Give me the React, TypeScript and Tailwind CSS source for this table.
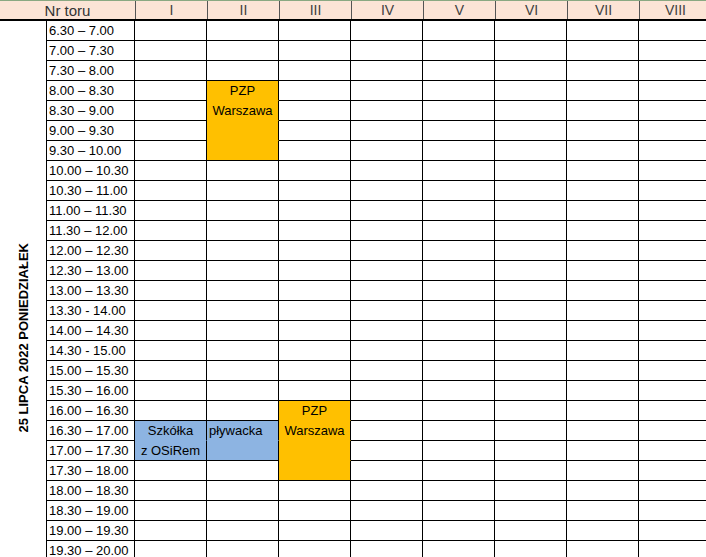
const times = [
  '6.30 – 7.00',
  '7.00 – 7.30',
  '7.30 – 8.00',
  '8.00 – 8.30',
  '8.30 – 9.00',
  '9.00 – 9.30',
  '9.30 – 10.00',
  '10.00 – 10.30',
  '10.30 – 11.00',
  '11.00 – 11.30',
  '11.30 – 12.00',
  '12.00 – 12.30',
  '12.30 – 13.00',
  '13.00 – 13.30',
  '13.30 - 14.00',
  '14.00 – 14.30',
  '14.30 - 15.00',
  '15.00 – 15.30',
  '15.30 – 16.00',
  '16.00 – 16.30',
  '16.30 – 17.00',
  '17.00 – 17.30',
  '17.30 – 18.00',
  '18.00 – 18.30',
  '18.30 – 19.00',
  '19.00 – 19.30',
  '19.30 – 20.00',
];

const lanes = ['I', 'II', 'III', 'IV', 'V', 'VI', 'VII', 'VIII'];

type Cell = {
  fill: 'orange' | 'blue';
  text?: string;
  left?: boolean;
  open?: boolean; // merged with the row below, no line under it
};

// key: `${row}-${lane}`
const cells: Record<string, Cell> = {
  '3-1': { fill: 'orange', text: 'PZP', open: true },
  '4-1': { fill: 'orange', text: 'Warszawa', open: true },
  '5-1': { fill: 'orange', open: true },
  '6-1': { fill: 'orange' },
  '19-2': { fill: 'orange', text: 'PZP', open: true },
  '20-2': { fill: 'orange', text: 'Warszawa', open: true },
  '21-2': { fill: 'orange', open: true },
  '22-2': { fill: 'orange' },
  '20-0': { fill: 'blue', text: 'Szkółka', open: true },
  '21-0': { fill: 'blue', text: 'z OSiRem' },
  '20-1': { fill: 'blue', text: 'pływacka', left: true, open: true },
  '21-1': { fill: 'blue' },
};

function LaneCell({ cell }: { cell?: Cell }) {
  let cls = 'bg-white border-b-black';
  if (cell?.fill === 'orange') cls = cell.open ? 'bg-[#ffc000] border-b-[#ffc000]' : 'bg-[#ffc000] border-b-black';
  if (cell?.fill === 'blue') cls = cell.open ? 'bg-[#8db4e2] border-b-[#8db4e2]' : 'bg-[#8db4e2] border-b-black';

  return (
    <div
      className={`w-[72px] h-[20px] shrink-0 flex items-center border-r border-b border-r-black ${cls} ${
        cell?.left ? 'justify-start pl-[2px]' : 'justify-center'
      }`}
    >
      {cell?.text}
    </div>
  );
}

export default function App() {
  return (
    <div
      className="w-[706px] h-[557px] overflow-hidden bg-white text-[13px] text-black leading-none"
      style={{ fontFamily: '"Liberation Sans", Arial, sans-serif' }}
    >
      {/* HEADER */}
      <div className="flex h-[21px] border-t border-t-[#8aa882] border-b-2 border-b-black bg-[#fce4d6] text-[#333] text-[15px]">
        <div className="w-[135px] shrink-0 flex items-center justify-center">Nr toru</div>
        {lanes.map((l) => (
          <div key={l} className="w-[72px] shrink-0 flex items-center justify-center border-l border-l-[#555] text-[#404040] text-[14px]">
            {l}
          </div>
        ))}
      </div>

      {/* BODY */}
      <div className="flex">
        <div className="w-[47px] shrink-0 flex flex-col items-center border-r border-black">
          <div className="mt-[222px] [writing-mode:vertical-rl] rotate-180 font-bold text-[13px] whitespace-nowrap">
            25 LIPCA 2022 PONIEDZIAŁEK
          </div>
        </div>

        <div className="flex flex-col">
          {times.map((t, r) => (
            <div key={t} className="flex">
              <div className="w-[88px] h-[20px] shrink-0 flex items-center pl-[2px] border-r border-b border-black whitespace-nowrap">
                {t}
              </div>
              {lanes.map((l, i) => (
                <LaneCell key={l} cell={cells[`${r}-${i}`]} />
              ))}
            </div>
          ))}
        </div>
      </div>
    </div>
  );
}
